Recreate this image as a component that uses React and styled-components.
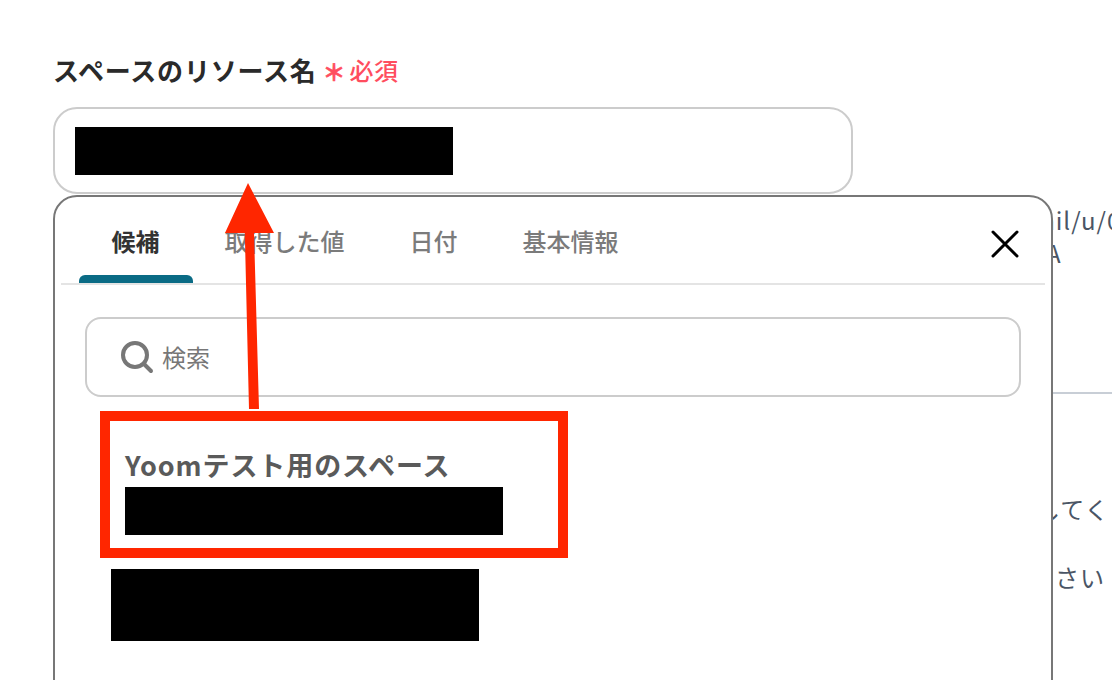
import styled, { createGlobalStyle } from "styled-components";

const tabs = ["候補", "取得した値", "日付", "基本情報"];

const GlobalStyle = createGlobalStyle`
  html, body {
    margin: 0;
    padding: 0;
    background: #fff;
  }
  * {
    box-sizing: border-box;
  }
`;

function App() {
  return (
    <Page>
      <GlobalStyle />
      <Label>
        スペースのリソース名
        <Asterisk>＊</Asterisk>
        <Required>必須</Required>
      </Label>

      <InputWrap>
        <ValueInput>
          <Redaction $width={378} $height={48} />
        </ValueInput>

        <Panel>
          <TabBar>
            {tabs.map((tab, i) => (
              <Tab key={tab} $active={i === 0}>
                {tab}
              </Tab>
            ))}
            <CloseButton>
              <svg width="30" height="30" viewBox="0 0 30 30">
                <path d="M3 3 L27 27 M27 3 L3 27" stroke="#000" strokeWidth="3" strokeLinecap="round" />
              </svg>
            </CloseButton>
          </TabBar>

          <SearchBox>
            <svg width="34" height="34" viewBox="0 0 34 34">
              <circle cx="15" cy="15" r="12" fill="none" stroke="#777" strokeWidth="4" />
              <path d="M24 24 L31 31" stroke="#777" strokeWidth="4" strokeLinecap="round" />
            </svg>
            <SearchText>検索</SearchText>
          </SearchBox>

          <OptionList>
            <Option>
              <OptionTitle>Yoomテスト用のスペース</OptionTitle>
              <Redaction $width={378} $height={48} />
            </Option>
            <SecondOption>
              <Redaction $width={368} $height={72} />
            </SecondOption>
          </OptionList>
        </Panel>
      </InputWrap>

      <Backdrop>
        <BackdropText $top={9} $left={965}>
          mail/u/0
        </BackdropText>
        <BackdropText $left={993}>A</BackdropText>
        <BackdropRule />
        <BackdropText $top={98} $left={983}>
          してく
        </BackdropText>
        <BackdropText $top={35} $left={1002}>
          さい
        </BackdropText>
      </Backdrop>

      <Highlight />
      <Arrow width="60" height="240" viewBox="0 0 60 240">
        <path d="M25 0 L51 50 L31 50 L36 226 L26 226 L21.8 50 L2 50 Z" fill="#ff2600" />
      </Arrow>
    </Page>
  );
}

const Page = styled.div`
  position: relative;
  width: 1112px;
  height: 680px;
  overflow: hidden;
  padding: 51px 0 0 53px;
  background: #fff;
  font-family: "Noto Sans CJK JP", "Noto Sans", sans-serif;
`;

const Label = styled.div`
  display: flex;
  align-items: center;
  height: 36px;
  font-size: 26px;
  font-weight: 700;
  letter-spacing: 0.8px;
  color: #2a2a2a;
`;

const Asterisk = styled.span`
  margin-left: 6px;
  margin-top: 4px;
  font-size: 23px;
  font-weight: 700;
  letter-spacing: 0;
  color: #ff4d5e;
  -webkit-text-stroke: 0.6px #ff4d5e;
`;

const Required = styled.span`
  margin-left: 4px;
  font-size: 24px;
  font-weight: 500;
  letter-spacing: 0.5px;
  color: #ff4d5e;
`;

const InputWrap = styled.div`
  position: relative;
  width: 800px;
  margin-top: 20px;
`;

const ValueInput = styled.div`
  height: 87px;
  padding: 18px 20px;
  border: 2px solid #ccc;
  border-radius: 24px;
  background: #fff;
`;

const Redaction = styled.div`
  width: ${({ $width }) => $width}px;
  height: ${({ $height }) => $height}px;
  background: #000;
`;

const Panel = styled.div`
  position: absolute;
  top: 88px;
  left: 0;
  z-index: 2;
  width: 1000px;
  height: 560px;
  border: 2px solid #777;
  border-radius: 24px;
  background: #fff;
`;

const TabBar = styled.div`
  display: flex;
  align-items: stretch;
  height: 88px;
  margin: 0 6px;
  padding-left: 18px;
  border-bottom: 2px solid #e4e4e4;
`;

const Tab = styled.div`
  position: relative;
  display: flex;
  align-items: center;
  padding: 1px 32.5px 0;
  font-size: 24px;
  font-weight: ${({ $active }) => ($active ? 700 : 500)};
  color: ${({ $active }) => ($active ? "#333" : "#7b7b7b")};

  &::after {
    content: "";
    display: ${({ $active }) => ($active ? "block" : "none")};
    position: absolute;
    left: 0;
    right: -1px;
    bottom: 0;
    height: 8px;
    border-radius: 6px 6px 0 0;
    background: #0a6b85;
  }
`;

const CloseButton = styled.div`
  display: flex;
  align-items: center;
  margin-left: auto;
  margin-top: 7px;
  margin-right: 25px;
`;

const SearchBox = styled.div`
  display: flex;
  align-items: center;
  gap: 8px;
  height: 80px;
  margin: 32px 30px 0;
  padding-left: 33px;
  border: 2px solid #ccc;
  border-radius: 16px;
`;

const SearchText = styled.span`
  margin-top: -2px;
  font-size: 24px;
  color: #777;
`;

const OptionList = styled.div`
  display: flex;
  flex-direction: column;
  padding: 49px 0 0 70px;
`;

const Option = styled.div`
  display: flex;
  flex-direction: column;
`;

const OptionTitle = styled.div`
  height: 41px;
  line-height: 38px;
  font-size: 27px;
  font-weight: 700;
  letter-spacing: 0.9px;
  color: #5a5a5a;
`;

const SecondOption = styled.div`
  margin: 34px 0 0 -14px;
`;

const Backdrop = styled.div`
  display: flex;
  flex-direction: column;
`;

const BackdropText = styled.div`
  margin-top: ${({ $top = 0 }) => $top}px;
  margin-left: ${({ $left }) => $left}px;
  white-space: nowrap;
  line-height: 33px;
  font-size: 24px;
  letter-spacing: 1px;
  color: #4a5565;
`;

const BackdropRule = styled.div`
  height: 2px;
  margin-top: 123px;
  background: #c8ced6;
`;

const Highlight = styled.div`
  position: absolute;
  left: 100px;
  top: 411px;
  z-index: 3;
  width: 468px;
  height: 147px;
  border: 10px solid #ff2600;
`;

const Arrow = styled.svg`
  position: absolute;
  left: 223px;
  top: 183px;
  z-index: 3;
`;

export default App;
